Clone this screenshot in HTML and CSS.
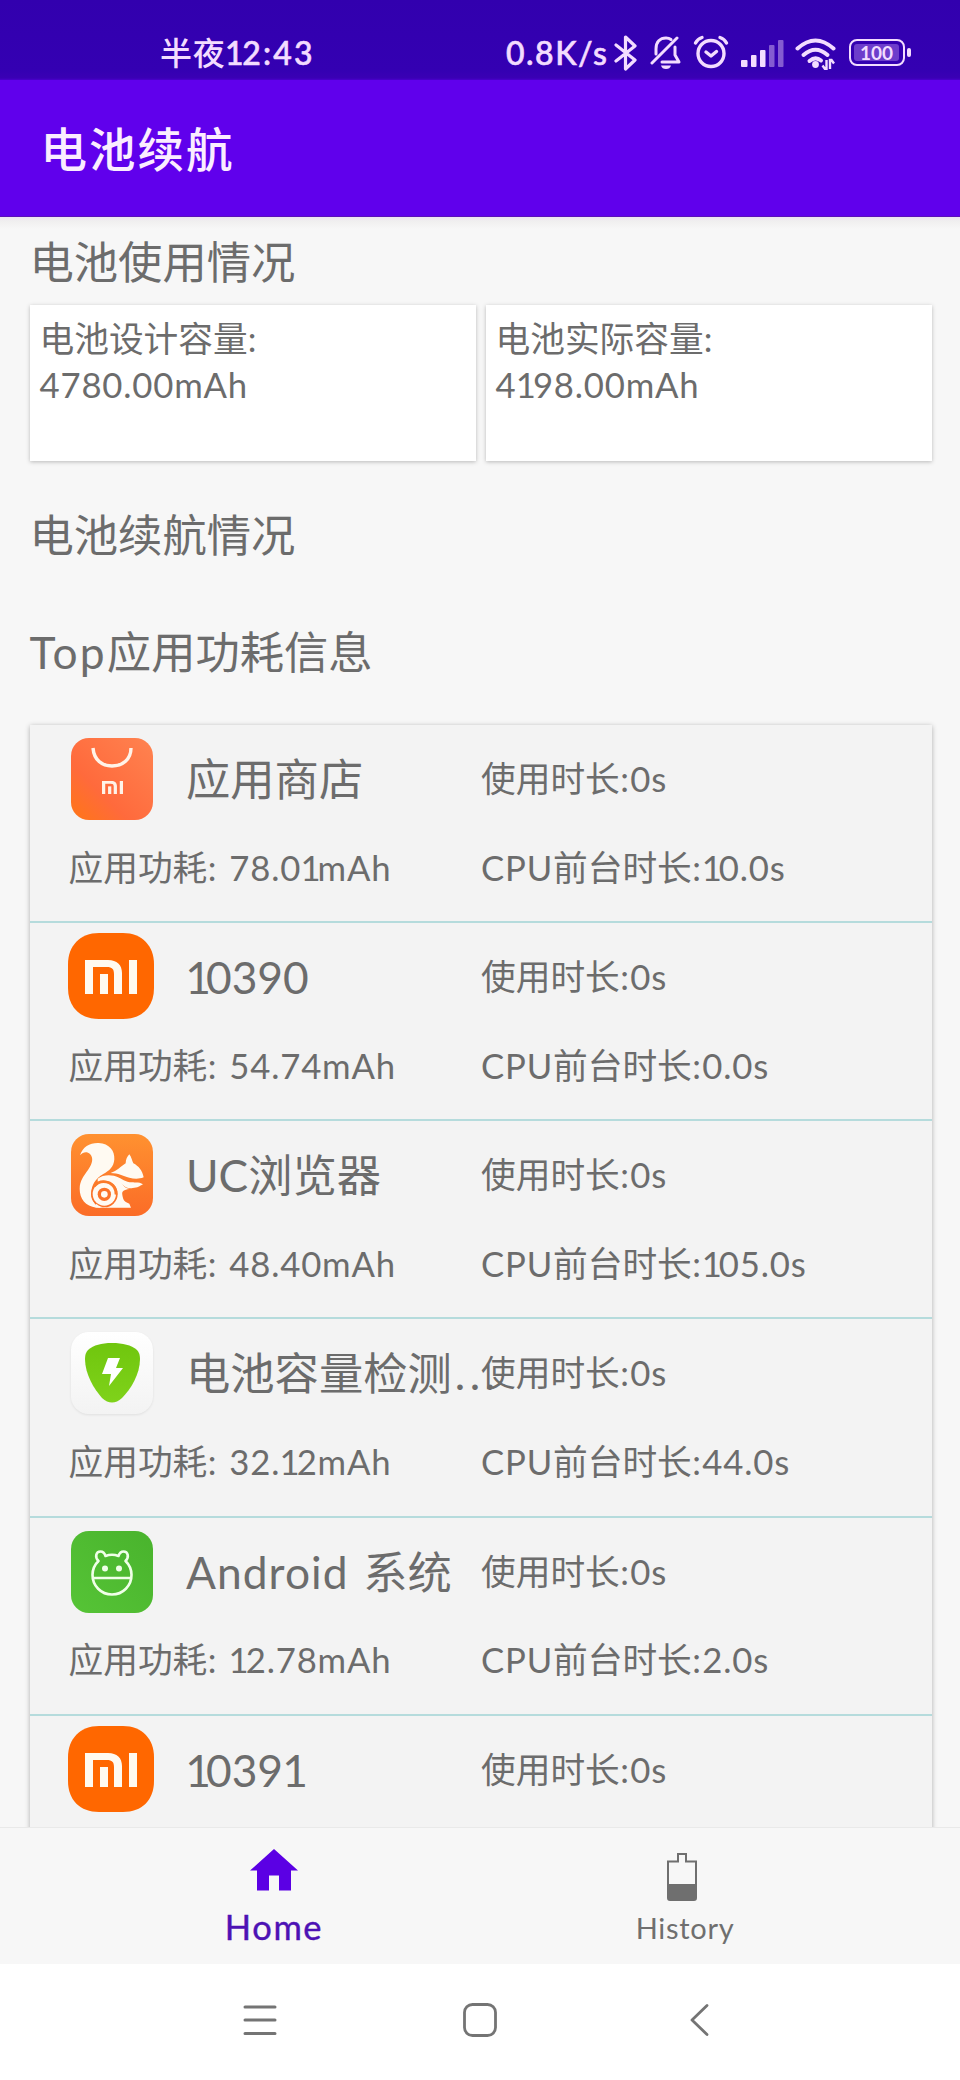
FILE: index.html
```html
<!DOCTYPE html>
<html lang="zh-CN">
<head>
<meta charset="utf-8">
<title>电池续航</title>
<link rel="stylesheet" href="styles.css">
</head>
<body>
<svg class="defs" width="0" height="0" aria-hidden="true">
  <defs>
    <linearGradient id="storeFill" x1="0" y1="1" x2="1" y2="0"><stop offset="0" stop-color="#ff7616"/><stop offset=".35" stop-color="#ff6a3c"/><stop offset="1" stop-color="#ff8350"/></linearGradient>
    <linearGradient id="ucFill" x1="0" y1="0" x2="0" y2="1"><stop offset="0" stop-color="#ff9130"/><stop offset="1" stop-color="#fb6c27"/></linearGradient>
    <linearGradient id="guardFill" x1="0" y1="0" x2="0" y2="1"><stop offset="0" stop-color="#ffffff"/><stop offset="1" stop-color="#f3f3f3"/></linearGradient>
    <linearGradient id="shieldFill" x1="0" y1="0" x2="0" y2="1"><stop offset="0" stop-color="#70c60e"/><stop offset="1" stop-color="#7fd21a"/></linearGradient>
    <linearGradient id="droidFill" x1="1" y1="0" x2="0" y2="1"><stop offset="0" stop-color="#49b32d"/><stop offset="1" stop-color="#56c436"/></linearGradient>
    <symbol id="mi" viewBox="0 0 52 34">
      <path d="M0 0H23C32 0 37 5 37 13V34H29V14C29 9 27 7 22 7H8V34H0Z"/>
      <rect x="15" y="14" width="8" height="20"/><rect x="44" y="0" width="8" height="34"/>
    </symbol>
  </defs>
</svg>

<div class="phone">
  <div class="status">
    <span class="clock">半夜<span class="time"><i class="one">1</i>2:43</span></span>
    <span class="speed">0.8K/s</span>
    <svg class="st-bt" viewBox="0 0 24 36"><path d="M2 10 21 25 11.5 34V2L21 11 2 26" fill="none" stroke="currentColor" stroke-width="3.2" stroke-linejoin="round" stroke-linecap="round"/></svg>
    <svg class="st-bell" viewBox="0 0 32 36"><g fill="none" stroke="currentColor" stroke-width="3" stroke-linecap="round" stroke-linejoin="round"><path d="M2 28 27 3"/><path d="M6 19V14C6 7 10 3 16 3Q19 3 21 4.500"/><path d="M25 12V20L29 27H12"/></g><path d="M11 30.500H21Q20 34 16 34T11 30.500Z" fill="currentColor"/></svg>
    <svg class="st-alarm" viewBox="0 0 36 34"><g fill="none" stroke="currentColor" stroke-width="3.400" stroke-linecap="round"><circle cx="18" cy="18.500" r="13"/><path d="M13 17 18 21 23.500 16.500" stroke-linejoin="round"/><path d="M2.500 8Q4.500 4 9 2.500M33.500 8Q31.500 4 27 2.500"/></g></svg>
    <svg class="st-signal" viewBox="0 0 44 28"><g fill="currentColor"><rect x="0" y="20" width="6.500" height="7" rx="1"/><rect x="10" y="15" width="5.500" height="12" rx="1"/><rect x="19" y="10" width="5.500" height="17" rx="1"/><g opacity=".42"><rect x="28" y="5" width="5.500" height="22" rx="1"/><rect x="37" y="0" width="5.500" height="27" rx="1"/></g></g></svg>
    <svg class="st-wifi" viewBox="0 0 42 32"><g fill="none" stroke="currentColor" stroke-width="4" stroke-linecap="round"><path d="M2.500 10.500Q20.500-5.500 38.500 10.500"/><path d="M8.500 17Q20.500 6.500 32.500 17"/><path d="M14.500 23Q20.500 18 26 22.500"/></g><circle cx="20.500" cy="26.500" r="3.400" fill="currentColor"/><path d="M31.500 22V31H30L27.500 27.500M35 31V22H36.500L39 25.500" fill="none" stroke="currentColor" stroke-width="2.400"/></svg>
    <div class="st-battery"><span class="level">100</span></div>
  </div>

  <header class="appbar"><h1>电池续航</h1></header>

  <main class="content">
    <h2 class="sec-usage">电池使用情况</h2>
    <div class="cards">
      <div class="card">电池设计容量:<br><span class="en">4780.00mAh</span></div>
      <div class="card">电池实际容量:<br><span class="en">4<i class="one">1</i>98.00mAh</span></div>
    </div>
    <h2 class="sec-endurance">电池续航情况</h2>
    <h2 class="sec-top"><span class="en wide">Top</span>应用功耗信息</h2>

    <div class="list">
      <div class="app">
        <div class="icon"><svg class="ic" viewBox="0 0 82 82"><rect width="82" height="82" rx="18" fill="url(#storeFill)"/><path d="M22 10C23 22 31 28 41 28S60 22 60 10" fill="none" stroke="#fff3e8" stroke-width="3.400"/><svg x="31" y="43" width="21" height="13" viewBox="0 0 52 34" preserveAspectRatio="none" fill="#fff3e8"><use href="#mi" width="52" height="34"/></svg></svg></div>
        <div class="name">应用商店</div>
        <div class="used">使用时长<span class="en"><i class="colon">:</i>0s</span></div>
        <div class="power">应用功耗<span class="en"><i class="colon">:</i> 78.0<i class="one">1</i>mAh</span></div>
        <div class="cpu"><span class="en">CPU</span>前台时长<span class="en"><i class="colon">:</i><i class="one">1</i>0.0s</span></div>
      </div>
      <div class="app">
        <div class="icon"><svg class="ic-mi" viewBox="0 0 86 86"><path d="M31 0H55C74 0 86 13 86 31V55C86 74 74 86 55 86H31C12 86 0 74 0 55V31C0 13 12 0 31 0Z" fill="#ff6700"/><use href="#mi" x="17" y="27" width="52" height="34" fill="#fffaf0"/></svg></div>
        <div class="name"><i class="one">1</i>0390</div>
        <div class="used">使用时长<span class="en"><i class="colon">:</i>0s</span></div>
        <div class="power">应用功耗<span class="en"><i class="colon">:</i> 54.74mAh</span></div>
        <div class="cpu"><span class="en">CPU</span>前台时长<span class="en"><i class="colon">:</i>0.0s</span></div>
      </div>
      <div class="app">
        <div class="icon"><svg class="ic" viewBox="0 0 246 246"><rect width="246" height="246" rx="54" fill="url(#ucFill)"/><g transform="translate(-65 -72)">
          <path d="M92 136C100 110 122 98 148 99 180 101 197 122 195 148 193 172 180 182 162 192 138 206 126 224 126 250 127 272 137 286 153 293H141C108 288 91 266 91 236 91 212 104 197 116 180 130 160 133 144 122 132 113 124 101 126 92 136Z" fill="#fffaf2"/>
          <path d="M145 206C162 193 190 193 207 203 219 220 221 232 240 237 224 240 217 242 219 255 221 266 222 275 240 281L245 293H148Z" fill="#fffaf2"/>
          <path d="M184 189C203 183 215 169 229 160 229 148 234 139 240 133 247 142 248 153 252 160 268 168 279 182 283 202 268 208 254 207 240 203 220 197 208 190 184 189Z" fill="#fffaf2"/>
          <path d="M201 200C218 205 228 217 248 217 260 218 272 215 281 223 270 228 266 234 250 234 232 237 222 227 210 215Z" fill="#fffaf2"/>
          <circle cx="165" cy="252" r="40" fill="#fb7329"/><circle cx="165" cy="252" r="35" fill="#fffaf2"/><path d="M134 229Q153 207 181 219 201 230 200 254" fill="none" stroke="#fb7a29" stroke-width="8"/><circle cx="165" cy="253" r="20" fill="#fb7329"/><circle cx="165" cy="253" r="10" fill="#fffaf2"/><path d="M141 281Q155 294 172 292H138Z" fill="#fffaf2"/>
        </g></svg></div>
        <div class="name">UC浏览器</div>
        <div class="used">使用时长<span class="en"><i class="colon">:</i>0s</span></div>
        <div class="power">应用功耗<span class="en"><i class="colon">:</i> 48.40mAh</span></div>
        <div class="cpu"><span class="en">CPU</span>前台时长<span class="en"><i class="colon">:</i><i class="one">1</i>05.0s</span></div>
      </div>
      <div class="app">
        <div class="icon"><svg class="ic guard" viewBox="0 0 82 82"><rect width="82" height="82" rx="18" fill="url(#guardFill)"/><path d="M41 11C52 11 60 13 66 18Q69 21 69 27C69 42 60 57 51 66Q41 75 31 66C23 57 14 42 14 27Q14 21 17 18C23 13 30 11 41 11Z" fill="url(#shieldFill)"/><path d="M37 26H49L45 36H52L38 54 40 42H31Z" fill="#fff"/></svg></div>
        <div class="name">电池容量检测<span class="dots">...</span></div>
        <div class="used">使用时长<span class="en"><i class="colon">:</i>0s</span></div>
        <div class="power">应用功耗<span class="en"><i class="colon">:</i> 32.<i class="one">1</i>2mAh</span></div>
        <div class="cpu"><span class="en">CPU</span>前台时长<span class="en"><i class="colon">:</i>44.0s</span></div>
      </div>
      <div class="app">
        <div class="icon"><svg class="ic" viewBox="0 0 82 82"><rect width="82" height="82" rx="18" fill="url(#droidFill)"/><g fill="none" stroke="#f0ffe8" stroke-width="2.600" stroke-linejoin="round"><path d="M27.500 30C23.500 26 25 20.500 29.500 20.500Q33 20.500 34.500 25Q41 22.500 47.500 25Q49 20.500 52.500 20.500C57 20.500 58.500 26 54.500 30A19.500 19.500 0 1 1 27.500 30Z"/><path d="M21.500 47H60.500"/></g><circle cx="34" cy="37.500" r="3" fill="#f0ffe8"/><circle cx="48" cy="37.500" r="3" fill="#f0ffe8"/></svg></div>
        <div class="name"><span class="en">Android </span>系统</div>
        <div class="used">使用时长<span class="en"><i class="colon">:</i>0s</span></div>
        <div class="power">应用功耗<span class="en"><i class="colon">:</i> <i class="one">1</i>2.78mAh</span></div>
        <div class="cpu"><span class="en">CPU</span>前台时长<span class="en"><i class="colon">:</i>2.0s</span></div>
      </div>
      <div class="app">
        <div class="icon"><svg class="ic-mi" viewBox="0 0 86 86"><path d="M31 0H55C74 0 86 13 86 31V55C86 74 74 86 55 86H31C12 86 0 74 0 55V31C0 13 12 0 31 0Z" fill="#ff6700"/><use href="#mi" x="17" y="27" width="52" height="34" fill="#fffaf0"/></svg></div>
        <div class="name"><i class="one">1</i>039<i class="one">1</i></div>
        <div class="used">使用时长<span class="en"><i class="colon">:</i>0s</span></div>
      </div>
    </div>
  </main>

  <nav class="tabs">
    <div class="tab home"><svg viewBox="0 0 48 42"><path d="M24 0 48 21.500H41V41.500H29V26.500H19V41.500H7V21.500H0Z" fill="currentColor"/></svg><span>Home</span></div>
    <div class="tab history"><svg viewBox="0 0 30 48"><path d="M1 8.500H11V1H19V8.500H29V45Q29 47 27 47H3Q1 47 1 45Z" fill="none" stroke="currentColor" stroke-width="2"/><path d="M1 31H29V45Q29 47 27 47H3Q1 47 1 45Z" fill="currentColor"/></svg><span>History</span></div>
  </nav>

  <div class="sysnav">
    <svg viewBox="0 0 34 34"><path d="M2 4H32M2 17H32M2 30.500H32" stroke="currentColor" stroke-width="3" stroke-linecap="round"/></svg>
    <svg viewBox="0 0 34 34"><rect x="1.500" y="1.500" width="31" height="31" rx="8" fill="none" stroke="currentColor" stroke-width="2.800"/></svg>
    <svg viewBox="0 0 34 34"><path d="M24 2.500 9 17 24 31.500" fill="none" stroke="currentColor" stroke-width="2.800" stroke-linecap="round" stroke-linejoin="round"/></svg>
  </div>
</div>
</body>
</html>
```
FILE: styles.css
```css
* { box-sizing: border-box; }
body {
  margin: 0;
  background: #fff;
  font-family: Lato, "Noto Sans CJK SC", sans-serif;
  color: #6c6c6c;
}
.defs { position: absolute; }
svg { display: block; flex: none; }
h1, h2 { margin: 0; font-weight: 400; white-space: nowrap; }

/* Latin runs are tracked slightly wider than the Chinese text */
.en { letter-spacing: .024em; word-spacing: .05em; }
.wide { letter-spacing: .05em; }
.one { font-style: normal; margin-left: -.02em; margin-right: -.11em; }
.colon { font-style: normal; margin: 0 .015em; }

.phone { width: 960px; height: 2080px; display: flex; flex-direction: column; overflow: hidden; }

.status {
  height: 80px;
  flex: none;
  display: flex;
  align-items: flex-start;
  background: linear-gradient(#3200ae 0, #3400b2 70px, #3a00b4 78px, #4a00cc 80px);
  color: #f3dcff;
  font-size: 32px;
  line-height: 40px;
  font-weight: 500;
  white-space: nowrap;
}
.clock { width: 506px; flex: none; padding-left: 160px; margin-top: 33px; letter-spacing: .8px; }
.time { letter-spacing: 2.200px; -webkit-text-stroke: .6px currentColor; }
.speed { width: 108px; flex: none; margin-top: 33px; letter-spacing: 1.500px; -webkit-text-stroke: .6px currentColor; }
.st-bt { width: 24px; height: 36px; margin: 35px 12px 0 0; }
.st-bell { width: 32px; height: 36px; margin: 35px 11px 0 0; }
.st-alarm { width: 36px; height: 34px; margin: 35px 12px 0 0; }
.st-signal { width: 44px; height: 28px; margin: 40px 10px 0 0; }
.st-wifi { width: 42px; height: 32px; margin: 38px 12px 0 0; }
.st-battery {
  position: relative;
  width: 56px;
  height: 27px;
  margin-top: 39px;
  padding: 3px;
  border: 2.500px solid currentColor;
  border-radius: 8px;
}
.st-battery::after {
  content: "";
  position: absolute;
  right: -8px;
  top: 7px;
  width: 4px;
  height: 9px;
  border-radius: 2px;
  background: currentColor;
}
.level {
  display: block;
  width: 45px;
  height: 17px;
  border-radius: 3px;
  background: #6d3dcb;
  font-size: 19px;
  font-weight: 700;
  line-height: 17px;
  text-align: center;
}

.appbar {
  height: 137px;
  flex: none;
  background: #6000ec;
  border-bottom: 1px solid #5a10b8;
  padding-left: 40.500px;
}
.appbar h1 {
  color: #fbedff;
  font-size: 46.500px;
  font-weight: 500;
  letter-spacing: 2px;
  line-height: 60px;
  margin-top: 39px;
}

.content {
  height: 1610px;
  flex: none;
  overflow: hidden;
  background: linear-gradient(#ede4f2 0, #f0efef 4px, #f7f7f7 12px);
  padding: 15px 28.500px 0 29.500px;
}
h2 { font-size: 44.300px; line-height: 60px; }
.cards { display: flex; gap: 10px; margin-top: 13px; }
.card {
  flex: 1;
  height: 156px;
  background: #fff;
  box-shadow: 0 1px 4px rgba(0, 0, 0, .25);
  padding: 11px 10px;
  font-size: 34.700px;
  line-height: 46px;
}
.sec-endurance { margin-top: 44px; }
.sec-top { margin-top: 57px; }

.list {
  height: 1200px;
  margin-top: 43px;
  background: #f3f3f3;
  box-shadow: 0 1px 5px rgba(0, 0, 0, .3);
}
.app {
  display: grid;
  grid-template-columns: 117.500px 295px 1fr;
  grid-template-rows: 114px 82.200px;
  padding-left: 39px;
  height: 198.200px;
  border-bottom: 2.500px solid #b5dbdc;
  font-size: 34.700px;
  line-height: 46px;
  white-space: nowrap;
}
.app:first-child { height: 198px; grid-template-rows: 114px 82px; }
.app:first-child .icon { padding-top: 13px; }
.icon { padding-top: 13px; }
.ic { width: 82px; height: 82px; margin-left: 2.500px; }
.ic-mi { width: 86px; height: 86px; margin-top: -3px; margin-left: -.500px; }
.guard { filter: drop-shadow(0 1px 1px rgba(0, 0, 0, .08)); }
.name { font-size: 44.300px; line-height: 60px; padding-top: 24px; }
.used { padding-top: 31px; }
.power { grid-column: 1 / 3; padding-top: 5.500px; }
.cpu { padding-top: 5.500px; }
.dots { letter-spacing: 4.500px; margin-left: 3px; }

.tabs {
  height: 137px;
  flex: none;
  display: flex;
  justify-content: space-between;
  background: #f7f7f7;
  border-top: 1px solid #e9e9e9;
  padding: 0 160px 0 159px;
}
.tab { display: flex; flex-direction: column; align-items: center; white-space: nowrap; }
.home { width: 230px; color: #5b00e4; font-size: 34.500px; }
.home svg { width: 48px; height: 42px; margin-top: 21px; }
.home span { line-height: 40px; margin-top: 16px; color: #4d12b4; letter-spacing: 1.600px; -webkit-text-stroke: .4px currentColor; }
.history { width: 230px; font-size: 29px; color: #6f6f6f; }
.history svg { width: 30px; height: 48px; margin-top: 25px; margin-right: 6px; }
.history span { line-height: 40px; margin-top: 7px; letter-spacing: .700px; }

.sysnav {
  flex: 1;
  display: flex;
  justify-content: center;
  gap: 186px;
  background: #fff;
  color: #747474;
  padding-top: 39px;
}
.sysnav svg { width: 34px; height: 34px; }
```
